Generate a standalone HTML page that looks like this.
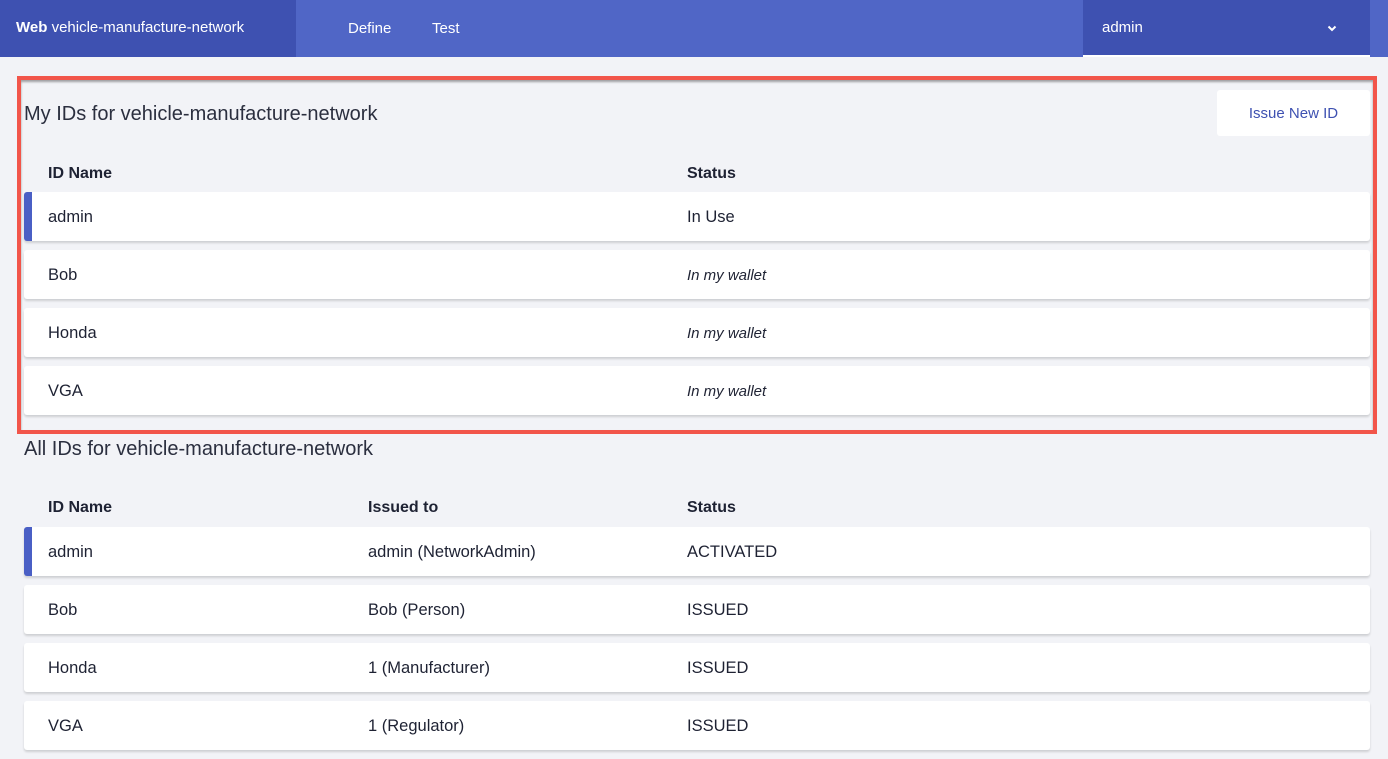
<!DOCTYPE html>
<html><head><style>
*{margin:0;padding:0;box-sizing:border-box}
body{width:1388px;height:759px;overflow:hidden;background:#f2f3f7;font-family:"Liberation Sans",sans-serif;color:#1e2233;position:relative}
.a{position:absolute}
.hdr{left:0;top:0;width:1388px;height:57px;background:#5066c6}
.brand{left:0;top:0;width:296px;height:57px;background:#3e51b1;color:#fff;font-size:15px;padding:19px 0 0 16px}
.nav{top:20px;color:#fff;font-size:15px}
.dd{left:1083px;top:0;width:287px;height:57px;background:#3e51b1;border-bottom:2px solid #fff;color:#fff;font-size:15px;padding:19px 0 0 19px}
.red{left:17px;top:76px;width:1360px;height:358px;border:4px solid #f2554a;box-shadow:inset 0 2px 2px rgba(0,0,0,.35)}
.title{font-size:20px;font-weight:300;color:#2b2f3f;left:24px}
.btn{left:1217px;top:90px;width:153px;height:46px;background:#fff;border-radius:3px;color:#3e51b1;font-size:15px;text-align:center;line-height:48px}
.th{font-weight:bold;font-size:16px}
.row{left:24px;width:1346px;height:49px;background:#fff;border-radius:3px;box-shadow:0 2px 2px rgba(0,0,0,.15)}
.row.sel{border-left:8px solid #4a5fc5}
.c{position:absolute;top:16px;font-size:16.5px}
.i{font-style:italic;font-size:15px;top:17px}
</style></head><body>
<div class="a hdr"></div>
<div class="a brand"><b>Web</b> vehicle-manufacture-network</div>
<div class="a nav" style="left:348px">Define</div>
<div class="a nav" style="left:432px">Test</div>
<div class="a dd">admin<svg style="position:absolute;left:244px;top:25px" width="10" height="7" viewBox="0 0 10 7"><path d="M1.5 1.5L5 5L8.5 1.5" stroke="#fff" stroke-width="2" fill="none"/></svg></div>

<div class="a red"></div>
<div class="a title" style="top:103px">My IDs for vehicle-manufacture-network</div>
<div class="a btn">Issue New ID</div>
<div class="a th" style="left:48px;top:165px">ID Name</div>
<div class="a th" style="left:687px;top:165px">Status</div>
<div class="a row sel" style="top:192px"><div class="c" style="left:16px">admin</div><div class="c" style="left:655px">In Use</div></div>
<div class="a row" style="top:250px"><div class="c" style="left:24px">Bob</div><div class="c i" style="left:663px">In my wallet</div></div>
<div class="a row" style="top:308px"><div class="c" style="left:24px">Honda</div><div class="c i" style="left:663px">In my wallet</div></div>
<div class="a row" style="top:366px"><div class="c" style="left:24px">VGA</div><div class="c i" style="left:663px">In my wallet</div></div>

<div class="a title" style="top:438px">All IDs for vehicle-manufacture-network</div>
<div class="a th" style="left:48px;top:499px">ID Name</div>
<div class="a th" style="left:368px;top:499px">Issued to</div>
<div class="a th" style="left:687px;top:499px">Status</div>
<div class="a row sel" style="top:527px"><div class="c" style="left:16px">admin</div><div class="c" style="left:336px">admin (NetworkAdmin)</div><div class="c" style="left:655px">ACTIVATED</div></div>
<div class="a row" style="top:585px"><div class="c" style="left:24px">Bob</div><div class="c" style="left:344px">Bob (Person)</div><div class="c" style="left:663px">ISSUED</div></div>
<div class="a row" style="top:643px"><div class="c" style="left:24px">Honda</div><div class="c" style="left:344px">1 (Manufacturer)</div><div class="c" style="left:663px">ISSUED</div></div>
<div class="a row" style="top:701px"><div class="c" style="left:24px">VGA</div><div class="c" style="left:344px">1 (Regulator)</div><div class="c" style="left:663px">ISSUED</div></div>
</body></html>
